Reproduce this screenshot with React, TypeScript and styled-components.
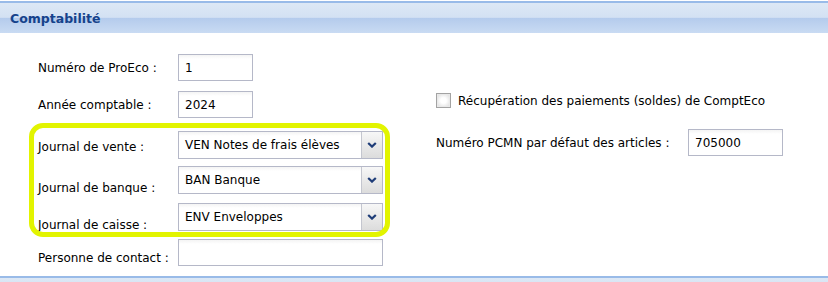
import React from 'react';
import styled, { createGlobalStyle } from 'styled-components';

const GlobalStyle = createGlobalStyle`
  html, body {
    margin: 0;
    padding: 0;
    background: #ffffff;
  }
  body {
    font-family: "DejaVu Sans", Tahoma, sans-serif;
    font-size: 12px;
    color: #000000;
    overflow: hidden;
  }
`;

const Panel = styled.div`
  width: 828px;
  padding-top: 1px;
`;

const PanelHeader = styled.div`
  box-sizing: border-box;
  height: 32px;
  border-top: 2px solid #99bbe8;
  background: linear-gradient(
    to bottom,
    #dde8f5 0%,
    #d3e1f3 48%,
    #b4cbec 50%,
    #c9dbf3 100%
  );
  display: flex;
  align-items: center;
  padding-left: 10px;
  font-weight: bold;
  font-size: 12.5px;
  color: #15428b;
`;

const PanelBody = styled.div`
  position: relative;
  height: 243px;
  display: flex;
`;

const NextHeader = styled.div`
  height: 10px;
  border-top: 2px solid #99bbe8;
  background: linear-gradient(to bottom, #dde8f5, #d3e1f3);
`;

const LeftColumn = styled.div`
  width: 383px;
  padding: 21px 0 0 38px;
  box-sizing: border-box;
  display: flex;
  flex-direction: column;
`;

const RightColumn = styled.div`
  padding: 60px 0 0 53px;
  display: flex;
  flex-direction: column;
`;

const FormRow = styled.div<{ $gap: number }>`
  display: flex;
  align-items: center;
  margin-top: ${({ $gap }) => $gap}px;
`;

// $drop pushes the label text below the field's centre line without growing the row
const Label = styled.label<{ $drop?: number; $width: number }>`
  width: ${({ $width }) => $width}px;
  flex-shrink: 0;
  padding-top: ${({ $drop }) => $drop ?? 0}px;
  margin-bottom: ${({ $drop }) => -($drop ?? 0)}px;
  white-space: nowrap;
`;

const TextField = styled.div<{ $width: number }>`
  box-sizing: border-box;
  width: ${({ $width }) => $width}px;
  height: 27px;
  border: 1px solid #b5b8c8;
  background: linear-gradient(to bottom, #f4f4f4 0px, #ffffff 4px);
  padding: 0 6px;
  display: flex;
  align-items: center;
`;

const Combo = styled.div`
  box-sizing: border-box;
  width: 205px;
  height: 28px;
  border: 1px solid #b5b8c8;
  display: flex;
  background: linear-gradient(to bottom, #f4f4f4 0px, #ffffff 4px);
`;

const ComboValue = styled.div`
  flex: 1;
  display: flex;
  align-items: center;
  padding-left: 6px;
  white-space: nowrap;
`;

const ComboTrigger = styled.div`
  width: 20px;
  border-left: 1px solid #c4c6cf;
  background: linear-gradient(to bottom, #f7f7f7, #dcdcdc);
  display: flex;
  align-items: center;
  justify-content: center;
`;

const CheckRow = styled.div`
  display: flex;
  align-items: center;
  gap: 7px;
`;

const CheckBox = styled.div`
  box-sizing: border-box;
  width: 15px;
  height: 15px;
  border: 1px solid #a3a3a3;
  background: radial-gradient(circle, #ffffff 30%, #d8d8d8 100%);
  box-shadow: inset 0 0 0 1px #e9e9e9;
`;

const Highlight = styled.div`
  position: absolute;
  left: 29px;
  top: 90px;
  width: 361px;
  height: 114px;
  box-sizing: border-box;
  border: 5px solid #e2f400;
  border-radius: 14px;
  pointer-events: none;
`;

const Chevron = () => (
  <svg width="10" height="6" viewBox="0 0 10 6">
    <path d="M1.2 1 L5 4.6 L8.8 1" fill="none" stroke="#1f3d78" strokeWidth="2.2" />
  </svg>
);

interface RowDef {
  label: string;
  value: string;
  kind: 'text' | 'combo';
  width: number;
  gap: number;
  drop?: number;
}

const rows: RowDef[] = [
  { label: 'Numéro de ProEco :', value: '1', kind: 'text', width: 75, gap: 0 },
  { label: 'Année comptable :', value: '2024', kind: 'text', width: 75, gap: 10 },
  { label: 'Journal de vente :', value: 'VEN Notes de frais élèves', kind: 'combo', width: 205, gap: 13, drop: 2 },
  { label: 'Journal de banque :', value: 'BAN Banque', kind: 'combo', width: 205, gap: 7, drop: 8 },
  { label: 'Journal de caisse :', value: 'ENV Enveloppes', kind: 'combo', width: 205, gap: 9, drop: 8 },
  { label: 'Personne de contact :', value: '', kind: 'text', width: 205, gap: 8, drop: 5 },
];

const App: React.FC = () => (
  <>
    <GlobalStyle />
    <Panel>
      <PanelHeader>Comptabilité</PanelHeader>
      <PanelBody>
        <LeftColumn>
          {rows.map(row => (
            <FormRow key={row.label} $gap={row.gap}>
              <Label $width={140} $drop={row.drop}>{row.label}</Label>
              {row.kind === 'combo' ? (
                <Combo>
                  <ComboValue>{row.value}</ComboValue>
                  <ComboTrigger>
                    <Chevron />
                  </ComboTrigger>
                </Combo>
              ) : (
                <TextField $width={row.width}>{row.value}</TextField>
              )}
            </FormRow>
          ))}
        </LeftColumn>
        <RightColumn>
          <CheckRow>
            <CheckBox />
            <span>Récupération des paiements (soldes) de ComptEco</span>
          </CheckRow>
          <FormRow $gap={21}>
            <Label $width={252}>Numéro PCMN par défaut des articles :</Label>
            <TextField $width={95}>705000</TextField>
          </FormRow>
        </RightColumn>
        <Highlight />
      </PanelBody>
      <NextHeader />
    </Panel>
  </>
);

export default App;
